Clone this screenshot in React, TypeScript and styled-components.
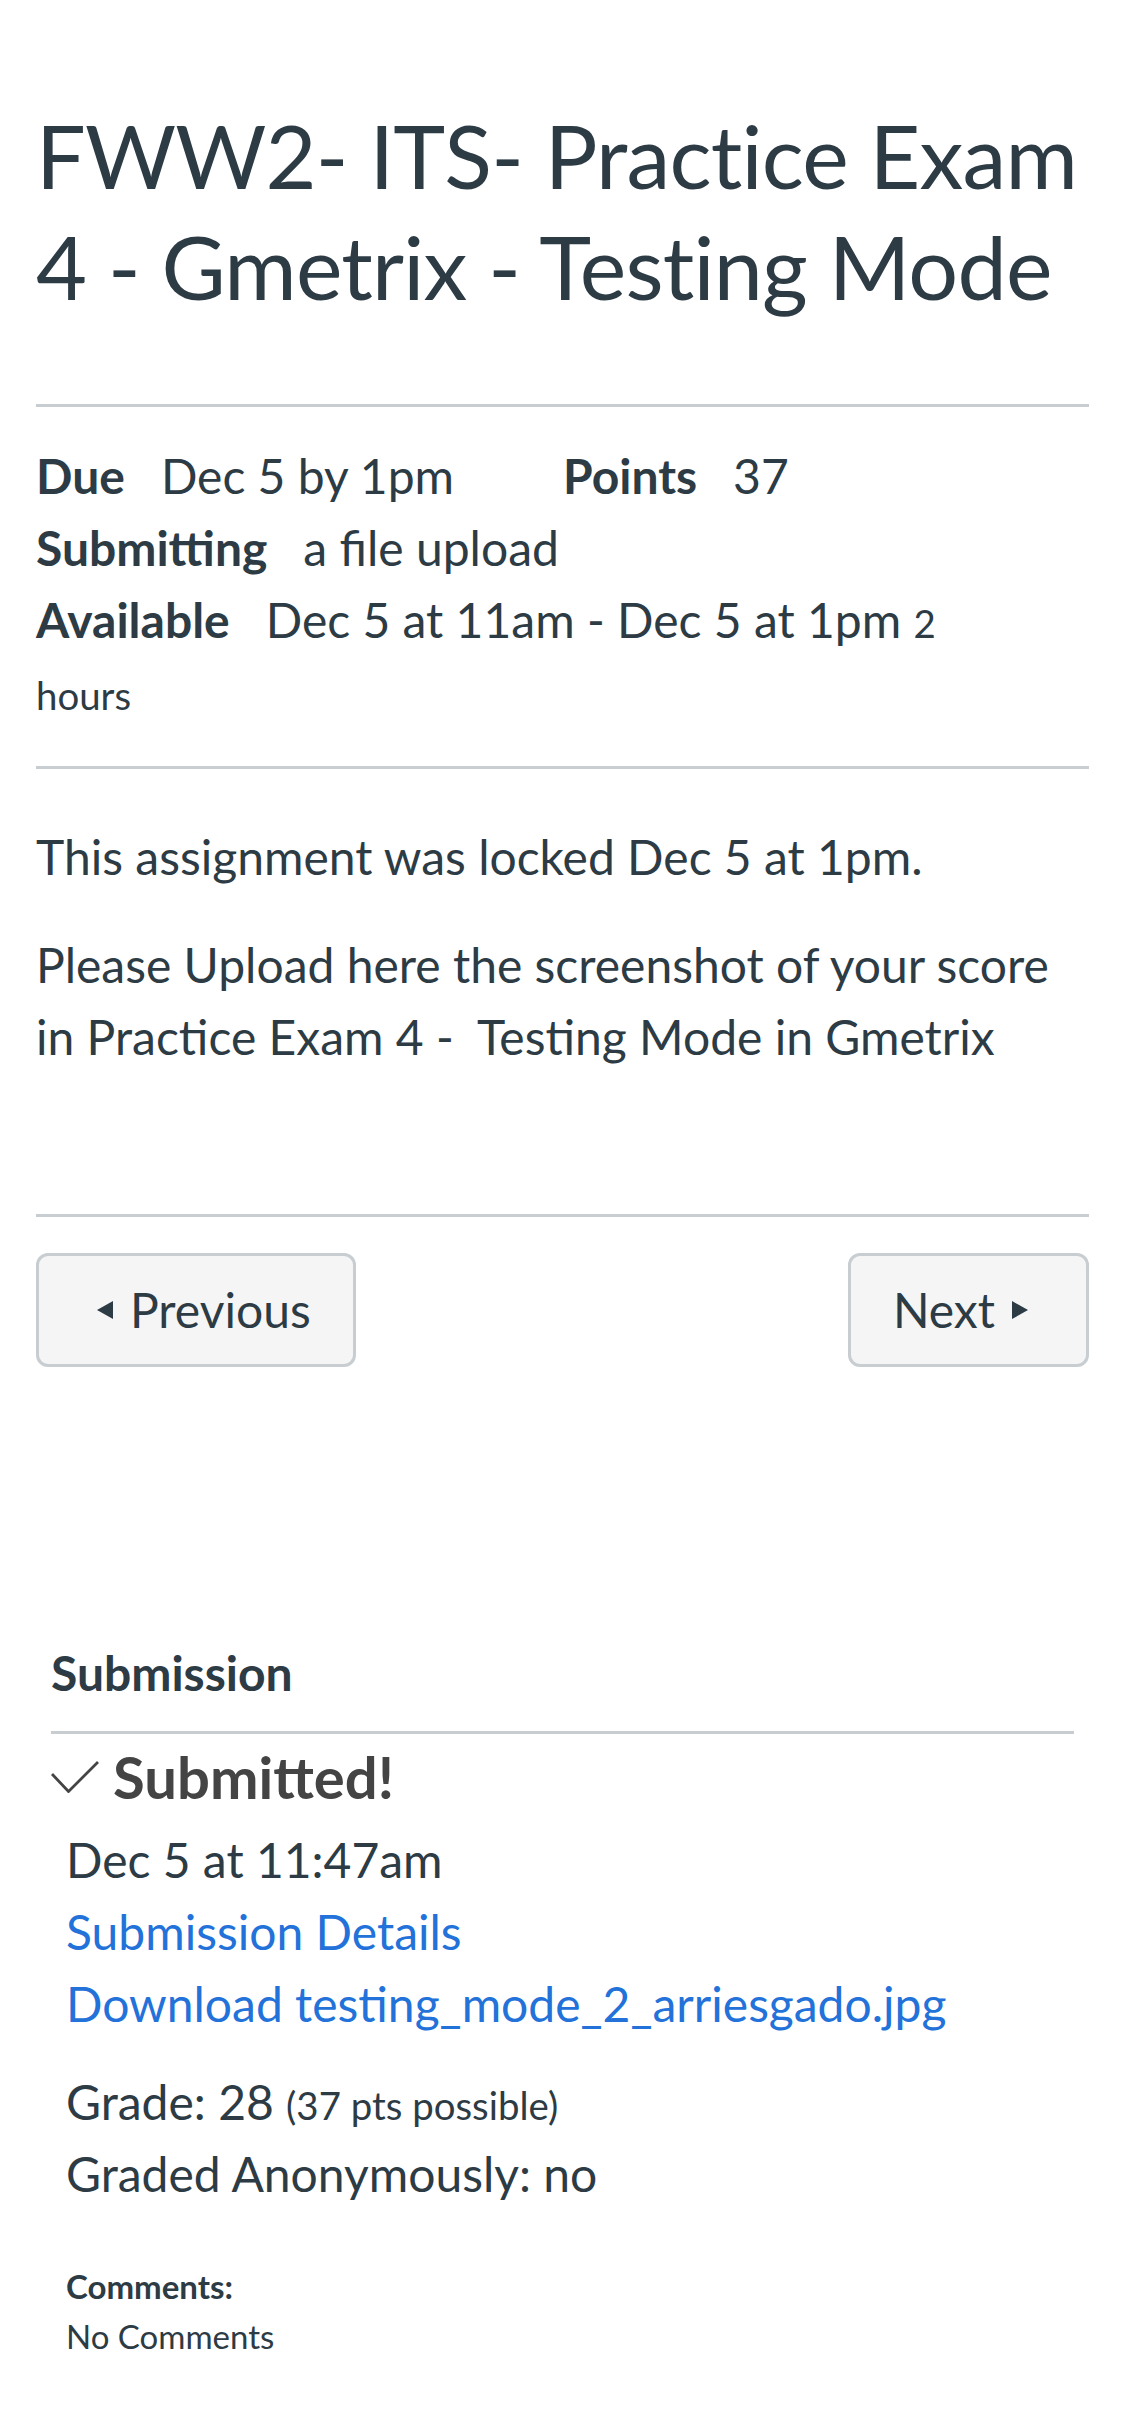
import React from "react";
import styled, { createGlobalStyle } from "styled-components";

const GlobalStyle = createGlobalStyle`
  html, body {
    margin: 0;
    padding: 0;
    background: #ffffff;
  }
  body {
    font-family: Lato, "Open Sans", "Noto Sans", sans-serif;
    color: #2d3b45;
    -webkit-font-smoothing: antialiased;
  }
  * { box-sizing: border-box; }
`;

const Page = styled.main`
  padding: 100px 36px 64px;
  font-family: Lato, "Open Sans", "Noto Sans", sans-serif;
  color: #2d3b45;
`;

const Title = styled.h1`
  margin: 0 0 82px;
  font-size: 88px;
  letter-spacing: -0.8px;
  line-height: 111px;
  font-weight: 400;
  color: #2d3b45;
`;

const Rule = styled.section<{ $top: number; $bottom: number }>`
  border-top: 3px solid #c7cdd1;
  padding-top: ${(p) => p.$top}px;
  padding-bottom: ${(p) => p.$bottom}px;
`;

const MetaLine = styled.div`
  font-size: 48px;
  line-height: 72px;
`;

const MetaLabel = styled.span`
  font-weight: 700;
  margin-right: 36px;
`;

const MetaValue = styled.span<{ $gapAfter?: number }>`
  margin-right: ${(p) => p.$gapAfter ?? 0}px;
`;

const Small = styled.span`
  font-size: 38.4px;
  line-height: 1.5;
`;

const Paragraph = styled.p`
  margin: 0 0 36px;
  font-size: 48px;
  line-height: 72px;
  &:last-child {
    margin-bottom: 0;
  }
`;

const NavRow = styled.nav`
  border-top: 3px solid #c7cdd1;
  padding-top: 36px;
  display: flex;
  justify-content: space-between;
  align-items: center;
`;

const NavButton = styled.button<{ $dir: "prev" | "next" }>`
  display: inline-flex;
  align-items: center;
  gap: 17px;
  padding: 18px ${(p) => (p.$dir === "prev" ? 42 : 58)}px 18px
    ${(p) => (p.$dir === "prev" ? 58 : 42)}px;
  background: #f5f5f5;
  border: 3px solid #c7cdd1;
  border-radius: 12px;
  font-family: Lato, "Open Sans", "Noto Sans", sans-serif;
  font-size: 48px;
  line-height: 72px;
  color: #2d3b45;
  cursor: pointer;
  svg {
    fill: #2d3b45;
    flex: none;
  }
`;

const Submission = styled.section`
  margin-top: 270px;
  padding: 0 15px;
`;

const SubmissionHeader = styled.h2`
  margin: 0;
  padding-bottom: 22px;
  border-bottom: 3px solid #c7cdd1;
  font-size: 48px;
  line-height: 72px;
  font-weight: 700;
  color: #2d3b45;
`;

const Status = styled.div`
  margin-top: 9px;
  display: flex;
  align-items: center;
  gap: 14px;
  font-size: 58px;
  line-height: 68px;
  font-weight: 700;
  color: #444444;
  svg {
    flex: none;
    stroke: #444444;
  }
`;

const Details = styled.div`
  margin-top: 13px;
  padding-left: 15px;
`;

const Line = styled.div`
  font-size: 48px;
  line-height: 72px;
`;

const LinkLine = styled.a`
  display: block;
  font-size: 48px;
  line-height: 72px;
  color: #2372da;
  text-decoration: none;
`;

const GradeBlock = styled.div`
  margin-top: 26px;
`;

const Comments = styled.div`
  margin-top: 52px;
  font-size: 33px;
  line-height: 1.5;
`;

const CommentsLabel = styled.div`
  font-weight: 700;
`;

const TriangleLeft = () => (
  <svg width="16" height="18" viewBox="0 0 16 18" aria-hidden="true">
    <path d="M0 9 L16 0 L16 18 Z" />
  </svg>
);

const TriangleRight = () => (
  <svg width="16" height="18" viewBox="0 0 16 18" aria-hidden="true">
    <path d="M16 9 L0 0 L0 18 Z" />
  </svg>
);

const Check = () => (
  <svg width="48" height="32" viewBox="0 0 48 32" aria-hidden="true" fill="none">
    <polyline points="1,13 17.5,30.5 47,1" strokeWidth="2.8" />
  </svg>
);

export default function App() {
  return (
    <>
      <GlobalStyle />
      <Page>
        <Title>
          FWW2- ITS- Practice Exam
          <br />4 - Gmetrix - Testing Mode
        </Title>

        <Rule $top={33} $bottom={38}>
          <MetaLine>
            <MetaLabel>Due</MetaLabel>
            <MetaValue $gapAfter={109}>Dec 5 by 1pm</MetaValue>
            <MetaLabel>Points</MetaLabel>
            <MetaValue>37</MetaValue>
          </MetaLine>
          <MetaLine>
            <MetaLabel>Submitting</MetaLabel>
            <MetaValue>a file upload</MetaValue>
          </MetaLine>
          <MetaLine>
            <MetaLabel>Available</MetaLabel>
            <MetaValue>Dec 5 at 11am - Dec 5 at 1pm</MetaValue>{" "}
            <Small>
              2<br />
              hours
            </Small>
          </MetaLine>
        </Rule>

        <Rule $top={52} $bottom={141}>
          <Paragraph>This assignment was locked Dec 5 at 1pm.</Paragraph>
          <Paragraph>
            Please Upload here the screenshot of your score
            <br />
            in Practice Exam 4 -{"\u00a0"} Testing Mode in Gmetrix
          </Paragraph>
        </Rule>

        <NavRow>
          <NavButton $dir="prev" type="button">
            <TriangleLeft />
            <span>Previous</span>
          </NavButton>
          <NavButton $dir="next" type="button">
            <span>Next</span>
            <TriangleRight />
          </NavButton>
        </NavRow>

        <Submission>
          <SubmissionHeader>Submission</SubmissionHeader>
          <Status>
            <Check />
            <span>Submitted!</span>
          </Status>
          <Details>
            <Line>Dec 5 at 11:47am</Line>
            <LinkLine href="#">Submission Details</LinkLine>
            <LinkLine href="#">Download testing_mode_2_arriesgado.jpg</LinkLine>
            <GradeBlock>
              <Line>
                Grade: 28 <Small>(37 pts possible)</Small>
              </Line>
              <Line>Graded Anonymously: no</Line>
            </GradeBlock>
            <Comments>
              <CommentsLabel>Comments:</CommentsLabel>
              <div>No Comments</div>
            </Comments>
          </Details>
        </Submission>
      </Page>
    </>
  );
}
